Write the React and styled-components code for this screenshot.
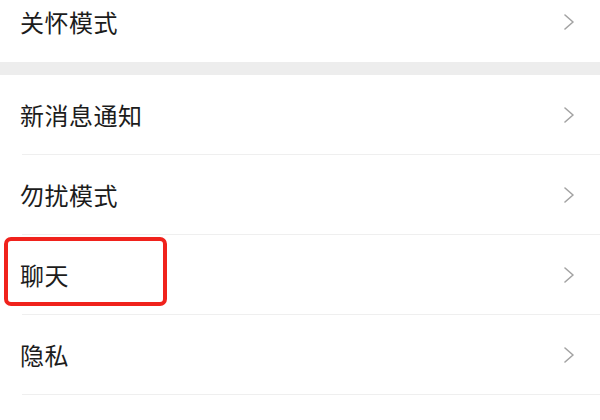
import React from 'react';
import styled, { createGlobalStyle } from 'styled-components';

const GlobalStyle = createGlobalStyle`
  html, body {
    margin: 0;
    padding: 0;
    background: #ffffff;
    overflow: hidden;
  }
  body {
    font-family: "Noto Sans CJK SC", "Noto Sans", sans-serif;
  }
`;

const Page = styled.div`
  width: 600px;
  height: 420px;
  overflow: hidden;
  background: #ffffff;
`;

const Group = styled.div`
  display: flex;
  flex-direction: column;
  margin-top: ${(p) => p.$offset || 0}px;
`;

const Band = styled.div`
  height: 13px;
  background: #ededed;
`;

const Row = styled.div`
  position: relative;
  display: flex;
  align-items: center;
  justify-content: space-between;
  height: 80px;
  padding: 0 25px 0 20px;
  box-sizing: border-box;
  background: #ffffff;

  &::after {
    content: '';
    display: ${(p) => (p.$divider ? 'block' : 'none')};
    position: absolute;
    left: 22px;
    right: 0;
    bottom: 0;
    height: 1px;
    background: #efefef;
  }
`;

const Label = styled.span`
  font-size: 24px;
  line-height: 1;
  color: #1c1c1c;
  letter-spacing: 0.5px;
`;

const Highlight = styled.div`
  position: absolute;
  left: 4px;
  top: 2px;
  width: 163px;
  height: 69px;
  box-sizing: border-box;
  border: 4px solid #f0221c;
  border-radius: 7px;
`;

const Chevron = () => (
  <svg width="12" height="16" viewBox="0 0 12 16" fill="none">
    <path d="M2 1 L10 8 L2 15" stroke="#a3a3a3" strokeWidth="1.6" strokeLinecap="round" strokeLinejoin="round" />
  </svg>
);

const SettingRow = ({ label, divider, highlight }) => (
  <Row $divider={divider}>
    <Label>{label}</Label>
    <Chevron />
    {highlight && <Highlight />}
  </Row>
);

export default function App() {
  return (
    <Page>
      <GlobalStyle />
      <Group $offset={-18}>
        <SettingRow label="关怀模式" />
      </Group>
      <Band />
      <Group>
        <SettingRow label="新消息通知" divider />
        <SettingRow label="勿扰模式" divider />
        <SettingRow label="聊天" divider highlight />
        <SettingRow label="隐私" divider />
      </Group>
    </Page>
  );
}
